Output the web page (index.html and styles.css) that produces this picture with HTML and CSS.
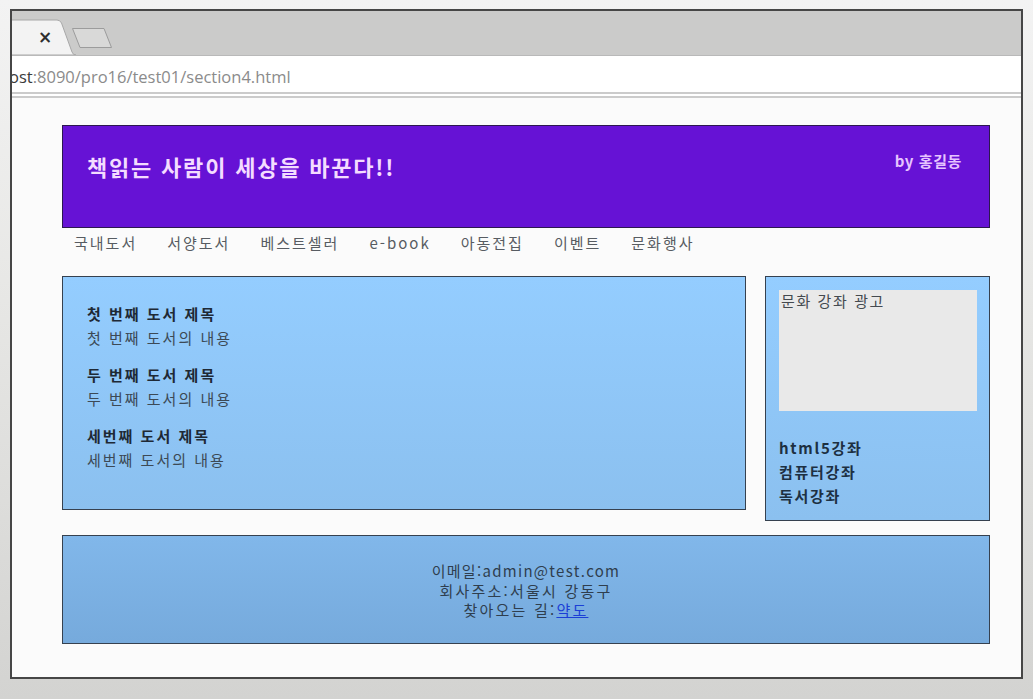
FILE: index.html
```html
<!DOCTYPE html>
<html lang="ko">
<head>
<meta charset="utf-8">
<title>section4</title>
<link rel="stylesheet" href="styles.css">
</head>
<body>
<div class="window">
  <div class="tabbar">
    <svg class="tabs" width="120" height="44" viewBox="0 0 120 44">
      <path d="M-2 9 H45 Q48 9 49.5 12 L60 41 Q61 44 64 44 H-2 Z" fill="#f3f3f3" stroke="#a8a8a8" stroke-width="1"/>
      <text x="33" y="32" class="tab-close">×</text>
      <path d="M60.5 17.5 H92 L99.5 36.5 H68 Z" fill="#d9d9d8" stroke="#9c9c9c" stroke-width="1"/>
    </svg>
  </div>
  <div class="addressbar"><span class="host">ost</span>:8090/pro16/test01/section4.html</div>
  <div class="page">
    <header class="site-header">
      <h1 class="site-title">책읽는 사람이 세상을 바꾼다!!</h1>
      <p class="author">by 홍길동</p>
    </header>
    <nav class="menu">
      <ul class="menu-list">
        <li>국내도서</li>
        <li>서양도서</li>
        <li>베스트셀러</li>
        <li>e-book</li>
        <li>아동전집</li>
        <li>이벤트</li>
        <li>문화행사</li>
      </ul>
    </nav>
    <div class="content">
      <section class="books">
        <article class="book">
          <h3 class="book-title">첫 번째 도서 제목</h3>
          <p class="book-text">첫 번째 도서의 내용</p>
        </article>
        <article class="book">
          <h3 class="book-title">두 번째 도서 제목</h3>
          <p class="book-text">두 번째 도서의 내용</p>
        </article>
        <article class="book">
          <h3 class="book-title">세번째 도서 제목</h3>
          <p class="book-text">세번째 도서의 내용</p>
        </article>
      </section>
      <aside class="side">
        <div class="ad">문화 강좌 광고</div>
        <ul class="courses">
          <li>html5강좌</li>
          <li>컴퓨터강좌</li>
          <li>독서강좌</li>
        </ul>
      </aside>
    </div>
    <footer class="site-footer">
      <p class="foot-line foot-email">이메일:admin@test.com</p>
      <p class="foot-line">회사주소:서울시 강동구</p>
      <p class="foot-line">찾아오는 길:<a class="map-link" href="#">약도</a></p>
    </footer>
  </div>
</div>
</body>
</html>
```

FILE: styles.css
```css
html, body {
  height: 100%;
}

body {
  margin: 0;
  background: linear-gradient(to bottom, #f3f3f3 0, #e8e8e6 40%, #d3d3d1 100%);
  font-family: "Noto Sans CJK KR", "Noto Sans", sans-serif;
  overflow: hidden;
}

.window {
  box-sizing: border-box;
  width: 1013px;
  height: 670px;
  margin: 9px 0 0 10px;
  border: 2px solid #464646;
  background: #fbfbfb;
  display: flex;
  flex-direction: column;
  overflow: hidden;
}

.tabbar {
  flex: none;
  height: 44px;
  background: #cbcbca;
  border-bottom: 1px solid #b9b9b9;
  display: flex;
  align-items: flex-end;
}

.tabs {
  display: block;
}

.tab-close {
  font-family: "DejaVu Sans", sans-serif;
  font-size: 17px;
  font-weight: bold;
  fill: #2e2e2e;
  text-anchor: middle;
}

.addressbar {
  flex: none;
  box-sizing: border-box;
  height: 42px;
  padding: 6px 0 0 1px;
  background: #ffffff;
  border-bottom: 6px double #cbcbcb;
  font-family: "Open Sans", "Liberation Sans", sans-serif;
  font-size: 16.5px;
  line-height: 30px;
  color: #8b8b8b;
  text-indent: -4px;
  white-space: nowrap;
  overflow: hidden;
}

.host {
  color: #3a3a3a;
}

.page {
  flex: 1;
  padding: 27px 0 0 50px;
  background: #fbfbfb;
}

.site-header {
  box-sizing: border-box;
  width: 928px;
  height: 103px;
  padding: 0 27px 0 24px;
  background: #6612d5;
  border: 1px solid #2c1750;
  display: flex;
  justify-content: space-between;
  align-items: flex-start;
}

.site-title {
  margin: 0;
  padding-top: 24px;
  font-size: 22px;
  line-height: 32px;
  font-weight: bold;
  letter-spacing: 1.8px;
  color: #f4dcff;
}

.author {
  margin: 0;
  padding-top: 24px;
  font-size: 15px;
  line-height: 22px;
  font-weight: bold;
  letter-spacing: 0.6px;
  color: #e6c4ff;
}

.menu-list {
  display: flex;
  gap: 30px;
  margin: 4px 0 0 12px;
  padding: 0;
  list-style: none;
  font-size: 15px;
  line-height: 22px;
  letter-spacing: 2px;
  color: #575c62;
}

.content {
  display: flex;
  align-items: flex-start;
  gap: 19px;
  margin-top: 22px;
}

.books {
  box-sizing: border-box;
  width: 684px;
  height: 234px;
  padding: 25px 24px;
  border: 1px solid #36414f;
  background: linear-gradient(to bottom, #94cdff 0%, #8bc0ef 100%);
}

.book + .book {
  margin-top: 13px;
}

.book-title {
  margin: 0;
  font-size: 15px;
  line-height: 24px;
  font-weight: bold;
  letter-spacing: 2px;
  color: #1e2935;
}

.book-text {
  margin: 0;
  font-size: 15px;
  line-height: 24px;
  letter-spacing: 2px;
  color: #3c4955;
}

.side {
  box-sizing: border-box;
  width: 225px;
  padding: 13px 12px 12px 13px;
  border: 1px solid #36414f;
  background: linear-gradient(to bottom, #94cdff 0%, #8bc0ef 100%);
}

.ad {
  box-sizing: border-box;
  height: 121px;
  padding: 1px 2px;
  background: #e9e9e9;
  font-size: 15px;
  line-height: 20px;
  letter-spacing: 1.6px;
  color: #444a50;
}

.courses {
  margin: 25px 0 0;
  padding: 0;
  list-style: none;
  font-size: 15px;
  line-height: 24px;
  font-weight: bold;
  letter-spacing: 1.7px;
  color: #1d3042;
}

.site-footer {
  box-sizing: border-box;
  width: 928px;
  height: 109px;
  margin-top: 14px;
  padding-top: 25px;
  border: 1px solid #36414f;
  background: linear-gradient(to bottom, #81b7ea 0%, #76aadc 100%);
  text-align: center;
}

.foot-line {
  margin: 0;
  font-size: 15px;
  line-height: 19.5px;
  letter-spacing: 2.2px;
  color: #2f3e4e;
}

.foot-email {
  letter-spacing: 1.3px;
}

.map-link {
  color: #1b3fd6;
  text-decoration: underline;
}
```
